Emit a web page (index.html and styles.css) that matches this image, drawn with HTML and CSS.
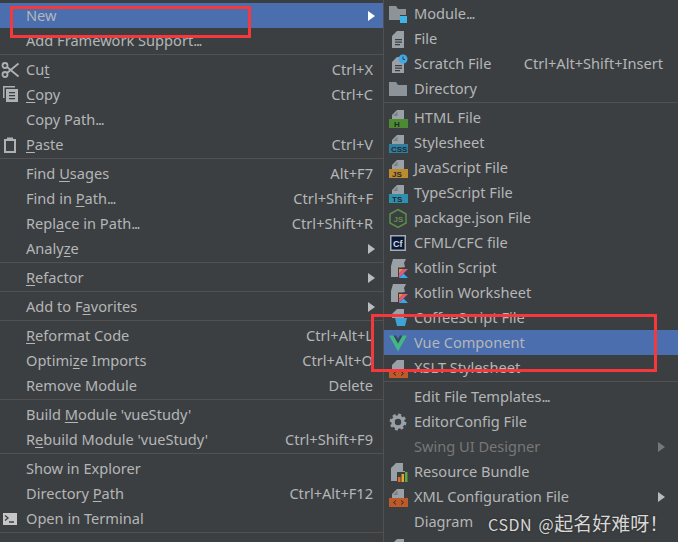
FILE: index.html
```html
<!DOCTYPE html>
<html lang="en">
<head>
<meta charset="utf-8">
<title>Context menu</title>
<link rel="stylesheet" href="styles.css">
</head>
<body>
<div class="desktop">
  <div class="menu menu-main">
    <div class="row active"><span class="ico"></span><span class="label">New</span><span class="arrow"></span></div>
    <div class="row"><span class="ico"></span><span class="label">Add Framework Support<span class="dots">...</span></span></div>
    <div class="sep"></div>
    <div class="row"><span class="ico"><svg width="20" height="20" viewBox="0 0 20 20" fill="none" stroke="#afb1b3" stroke-width="1.800"><circle cx="5" cy="5.500" r="2.500"/><circle cx="5" cy="14.500" r="2.500"/><path d="M7 7 18.500 16.500M7 13 18.500 3.500"/></svg></span><span class="label">Cu<u>t</u></span><span class="key">Ctrl+X</span></div>
    <div class="row"><span class="ico"><svg width="20" height="20" viewBox="0 0 20 20"><path fill="#afb1b3" d="M3 1h12v1.500H4.500V13H3z"/><path fill="#afb1b3" d="M6 4h12v13H6z"/><path fill="#3c3f41" d="M9 7h6v1.300H9zM9 10h6v1.300H9zM9 13h6v1.300H9z"/></svg></span><span class="label"><u>C</u>opy</span><span class="key">Ctrl+C</span></div>
    <div class="row"><span class="ico"></span><span class="label">Copy Path<span class="dots">...</span></span></div>
    <div class="row"><span class="ico"><svg width="20" height="20" viewBox="0 0 20 20"><path fill="#afb1b3" d="M4 4h3V2.500h6V4h3v14H4z"/><path fill="#3c3f41" d="M6 6h8v10H6z"/></svg></span><span class="label"><u>P</u>aste</span><span class="key">Ctrl+V</span></div>
    <div class="sep"></div>
    <div class="row"><span class="ico"></span><span class="label">Find <u>U</u>sages</span><span class="key">Alt+F7</span></div>
    <div class="row"><span class="ico"></span><span class="label">Find in <u>P</u>ath<span class="dots">...</span></span><span class="key">Ctrl+Shift+F</span></div>
    <div class="row"><span class="ico"></span><span class="label">Repl<u>a</u>ce in Path<span class="dots">...</span></span><span class="key">Ctrl+Shift+R</span></div>
    <div class="row"><span class="ico"></span><span class="label">Analy<u>z</u>e</span><span class="arrow"></span></div>
    <div class="sep"></div>
    <div class="row"><span class="ico"></span><span class="label"><u>R</u>efactor</span><span class="arrow"></span></div>
    <div class="sep"></div>
    <div class="row"><span class="ico"></span><span class="label">Add to F<u>a</u>vorites</span><span class="arrow"></span></div>
    <div class="sep"></div>
    <div class="row"><span class="ico"></span><span class="label"><u>R</u>eformat Code</span><span class="key">Ctrl+Alt+L</span></div>
    <div class="row"><span class="ico"></span><span class="label">Optimi<u>z</u>e Imports</span><span class="key">Ctrl+Alt+O</span></div>
    <div class="row"><span class="ico"></span><span class="label">Remove Module</span><span class="key">Delete</span></div>
    <div class="sep"></div>
    <div class="row"><span class="ico"></span><span class="label">Build <u>M</u>odule 'vueStudy'</span></div>
    <div class="row"><span class="ico"></span><span class="label">R<u>e</u>build Module 'vueStudy'</span><span class="key">Ctrl+Shift+F9</span></div>
    <div class="sep"></div>
    <div class="row"><span class="ico"></span><span class="label">Show in Explorer</span></div>
    <div class="row"><span class="ico"></span><span class="label">Directory <u>P</u>ath</span><span class="key">Ctrl+Alt+F12</span></div>
    <div class="row"><span class="ico"><svg width="20" height="20" viewBox="0 0 20 20"><path fill="#c4c6c8" d="M3 4h14v12H3z"/><path fill="none" stroke="#3c3f41" stroke-width="1.300" d="M5 6.500 8 9l-3 2.500M9 13h5"/></svg></span><span class="label">Open in Terminal</span></div>
    <div class="sep"></div>
  </div>

  <div class="menu menu-sub">
    <div class="row"><span class="ico"><svg width="20" height="20" viewBox="0 0 20 20"><path fill="#8d9499" d="M1 2h7l2 3h8v6h-6v5H1z"/><path fill="#3fb4e6" d="M12 12h7v7h-7z"/></svg></span><span class="label">Module<span class="dots">...</span></span></div>
    <div class="row"><span class="ico"><svg width="20" height="20" viewBox="0 0 20 20"><path fill="#9aa1a6" d="M9 2h7v17H4V7z"/><path fill="#3c3f41" d="M7 10h7v1.200H7zM7 12.500h7v1.200H7zM7 15h5v1.200H7z"/></svg></span><span class="label">File</span></div>
    <div class="row"><span class="ico"><svg width="20" height="20" viewBox="0 0 20 20"><path fill="#9aa1a6" d="M9 3h7v16H4V8z"/><path fill="#3c3f41" d="M7 11h7v1.200H7zM7 13.500h7v1.200H7zM7 16h5v1.200H7z"/><circle cx="15" cy="5" r="4.500" fill="#3fa9e6"/><path stroke="#3c3f41" stroke-width="1" fill="none" d="M15 2.500V5.500H17"/></svg></span><span class="label">Scratch File</span><span class="key">Ctrl+Alt+Shift+Insert</span></div>
    <div class="row"><span class="ico"><svg width="20" height="20" viewBox="0 0 20 20"><path fill="#8d9499" d="M1 3h7l2 3h9v11H1z"/></svg></span><span class="label">Directory</span></div>
    <div class="sep"></div>
    <div class="row"><span class="ico"><svg width="20" height="20" viewBox="0 0 20 20"><path fill="#9aa1a6" d="M9 2h7v9H4V7z"/><path fill="#3c3f41" d="M9.500 3.500V8H5z" opacity=".35"/><path fill="#4c8a34" d="M1 11h19v9H1z"/><text x="6" y="19" class="tag tag-dark">H</text></svg></span><span class="label">HTML File</span></div>
    <div class="row"><span class="ico"><svg width="20" height="20" viewBox="0 0 20 20"><path fill="#9aa1a6" d="M9 2h7v9H4V7z"/><path fill="#3c3f41" d="M9.500 3.500V8H5z" opacity=".35"/><path fill="#2f7fa0" d="M1 11h19v9H1z"/><text x="3" y="19" class="tag tag-dark">CSS</text></svg></span><span class="label">Stylesheet</span></div>
    <div class="row"><span class="ico"><svg width="20" height="20" viewBox="0 0 20 20"><path fill="#9aa1a6" d="M9 2h7v9H4V7z"/><path fill="#3c3f41" d="M9.500 3.500V8H5z" opacity=".35"/><path fill="#bd8a2e" d="M1 11h19v9H1z"/><text x="4" y="19" class="tag tag-dark">JS</text></svg></span><span class="label">JavaScript File</span></div>
    <div class="row"><span class="ico"><svg width="20" height="20" viewBox="0 0 20 20"><path fill="#9aa1a6" d="M9 2h7v9H4V7z"/><path fill="#3c3f41" d="M9.500 3.500V8H5z" opacity=".35"/><path fill="#2f8fae" d="M1 11h19v9H1z"/><text x="4" y="19" class="tag tag-dark">TS</text></svg></span><span class="label">TypeScript File</span></div>
    <div class="row"><span class="ico"><svg width="20" height="20" viewBox="0 0 20 20"><path fill="none" stroke="#5c8f4c" stroke-width="1.500" d="M10 1.500 18 6v9L10 19.500 2 15V6z"/><text x="5.500" y="14" class="tag tag-green">JS</text></svg></span><span class="label">package.json File</span></div>
    <div class="row"><span class="ico"><svg width="20" height="20" viewBox="0 0 20 20"><path fill="#a5aeb8" d="M2 2h16v16H2z"/><path fill="#0b1833" d="M3.500 3.500h13v13h-13z"/><text x="5" y="14" class="tag tag-cf">Cf</text></svg></span><span class="label">CFML/CFC file</span></div>
    <div class="row"><span class="ico"><svg width="20" height="20" viewBox="0 0 20 20"><path fill="#9aa1a6" d="M5 1h13l-2 4 1 4-6 2v8H3V8z"/><path fill="#3c3f41" d="M10 9.500h11V21H10z"/><path fill="#f08a3c" d="M11 11h4.500L11 15.500z"/><path fill="#e2577c" d="M15.500 11H20l-9 9v-4.500z"/><path fill="#39a8e8" d="M15.500 15.500 20 20h-9z"/></svg></span><span class="label">Kotlin Script</span></div>
    <div class="row"><span class="ico"><svg width="20" height="20" viewBox="0 0 20 20"><path fill="#9aa1a6" d="M5 1h13l-2 4 1 4-6 2v8H3V8z"/><path fill="#3c3f41" d="M10 9.500h11V21H10z"/><path fill="#f08a3c" d="M11 11h4.500L11 15.500z"/><path fill="#e2577c" d="M15.500 11H20l-9 9v-4.500z"/><path fill="#39a8e8" d="M15.500 15.500 20 20h-9z"/></svg></span><span class="label">Kotlin Worksheet</span></div>
    <div class="row"><span class="ico"><svg width="20" height="20" viewBox="0 0 20 20"><path fill="#9aa1a6" d="M9 1h7v9H4V6z"/><path fill="#3fa3d8" d="M7 10h12l-2 8H9z"/></svg></span><span class="label">CoffeeScript File</span></div>
    <div class="row active"><span class="ico"><svg width="20" height="20" viewBox="0 0 20 20"><path fill="#41b883" d="M1 2.500h4.500l4.500 8 4.500-8H19L10 18.500z"/><path fill="#35495e" d="M5.500 2.500h2.500l2 3.500 2-3.500h2.500l-4.500 8z"/></svg></span><span class="label">Vue Component</span></div>
    <div class="row"><span class="ico"><svg width="20" height="20" viewBox="0 0 20 20"><path fill="#9aa1a6" d="M9 2h7v9H4V7z"/><path fill="#bf5a28" d="M1 11h19v9H1z"/><path fill="none" stroke="#2b2b2b" d="M8 13.500l-2.500 2 2.500 2M13 13.500l2.500 2-2.500 2"/></svg></span><span class="label">XSLT Stylesheet</span></div>
    <div class="sep"></div>
    <div class="row"><span class="ico"></span><span class="label">Edit File Templates<span class="dots">...</span></span></div>
    <div class="row"><span class="ico"><svg width="20" height="20" viewBox="0 0 20 20"><circle cx="10" cy="10" r="5" fill="none" stroke="#9aa1a6" stroke-width="3.500"/><circle cx="10" cy="10" r="7.200" fill="none" stroke="#9aa1a6" stroke-width="2.400" stroke-dasharray="3 2.650"/></svg></span><span class="label">EditorConfig File</span></div>
    <div class="row disabled"><span class="ico"></span><span class="label">Swing UI Designer</span><span class="arrow"></span></div>
    <div class="row"><span class="ico"><svg width="20" height="20" viewBox="0 0 20 20"><path fill="#9aa1a6" d="M8 1h7v8h2v1H9v9H3V6z"/><path fill="#e8682a" d="M10 15h2.500v5H10z"/><path fill="#e8a52a" d="M13.500 12H16v8h-2.500z"/><path fill="#5ca83c" d="M17 10h2.500v10H17z"/></svg></span><span class="label">Resource Bundle</span></div>
    <div class="row"><span class="ico"><svg width="20" height="20" viewBox="0 0 20 20"><path fill="#9aa1a6" d="M9 2h7v9H4V7z"/><path fill="#3c3f41" d="M9.500 3.500V8H5z" opacity=".35"/><path fill="#bf5a28" d="M1 11h19v9H1z"/><path fill="none" stroke="#2b2b2b" d="M8 13.500l-2.500 2 2.500 2M13 13.500l2.500 2-2.500 2"/></svg></span><span class="label">XML Configuration File</span><span class="arrow"></span></div>
    <div class="row"><span class="ico"></span><span class="label">Diagram</span></div>
    <div class="row"><span class="ico"><svg width="20" height="20" viewBox="0 0 20 20"><path fill="#9aa1a6" d="M9 2h7v9H4V7z"/></svg></span><span class="label">HTTP Request</span></div>
  </div>

  <div class="mark mark-new"></div>
  <div class="mark mark-vue"></div>
  <div class="watermark">CSDN @<span class="wm-cjk">起名好难呀！</span></div>
</div>
</body>
</html>
```
FILE: styles.css
```css
* { box-sizing: border-box; }
html, body { margin: 0; height: 100%; overflow: hidden; background: #3c3f41; }
.desktop {
  position: relative;
  width: 678px;
  height: 542px;
  display: flex;
  overflow: hidden;
  font-family: "Noto Sans", "Liberation Sans", sans-serif;
  font-size: 14.6px;
  line-height: 18px;
  color: #b4b6b8;
  background: #3c3f41;
}
.menu { flex: none; height: 560px; }
.menu-main { width: 384px; padding-top: 3px; border-right: 1px solid #515151; }
.menu-sub { width: 294px; padding-top: 1px; }
.row { height: 25px; display: flex; align-items: center; padding-right: 8px; white-space: nowrap; }
.menu-sub .row { padding-right: 13px; }
.ico { flex: none; width: 26px; height: 20px; }
.ico svg { display: block; overflow: visible; }
.menu-sub .ico { width: 30px; padding-left: 4px; }
.label, .key { margin-bottom: 1px; }
.label { flex: none; }
.dots { letter-spacing: -1.2px; }
.key { margin-left: auto; margin-right: 2px; }
.arrow {
  margin-left: auto;
  width: 0;
  height: 0;
  border-left: 7px solid #b9bbbd;
  border-top: 5px solid transparent;
  border-bottom: 5px solid transparent;
}
.menu-sub .arrow { margin-right: 0; }
.active { background: #4b6eaf; }
.active .arrow { border-left-color: #fff; }
.disabled { color: #777; }
.disabled .arrow { border-left-color: #777; }
.sep { height: 4px; padding-top: 1px; }
.sep::before { content: ""; display: block; height: 1px; background: #515151; }
u { text-underline-offset: 2px; }
.tag { font-family: "Liberation Sans", sans-serif; font-weight: bold; font-size: 8px; }
.tag-dark { fill: #26282a; }
.tag-green { fill: #5c8f4c; font-size: 8px; }
.tag-cf { fill: #cfd8e8; font-size: 9px; }
.mark { position: absolute; border: 3px solid #f5383c; }
.mark-new { left: 10px; top: 6px; width: 241px; height: 32px; }
.mark-vue { left: 371px; top: 314px; width: 286px; height: 58px; }
.watermark {
  position: absolute;
  left: 488px;
  top: 511px;
  font-family: "Noto Sans CJK SC", "Noto Sans", sans-serif;
  font-size: 16px;
  line-height: 24px;
  letter-spacing: .6px;
  word-spacing: 2px;
  color: #d8d8d8;
  text-shadow: 0 0 2px #222;
  white-space: nowrap;
}
.wm-cjk { font-size: 19px; letter-spacing: 0; }
```
